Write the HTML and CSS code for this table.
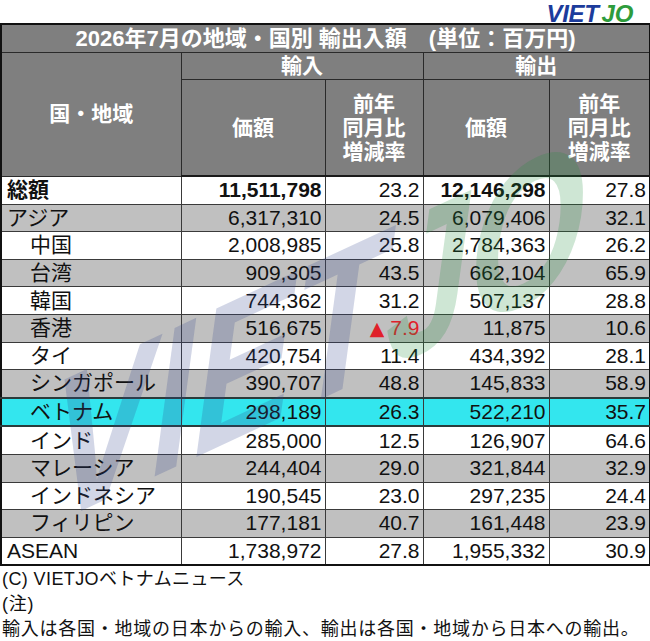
FILE: index.html
```html
<!DOCTYPE html>
<html lang="ja">
<head>
<meta charset="utf-8">
<title>2026年7月の地域・国別 輸出入額</title>
<link rel="stylesheet" href="styles.css">
</head>
<body>
<div class="page">
  <div class="logo-row"><span class="logo"><span class="logo-viet">VIET</span><span class="logo-jo">JO</span></span></div>
  <div class="table-wrap">
    <table class="trade">
      <colgroup>
        <col class="c-region"><col class="c-val1"><col class="c-rate1"><col class="c-val2"><col class="c-rate2">
      </colgroup>
      <thead>
        <tr class="title-row"><th colspan="5">2026年7月の地域・国別 輸出入額　(単位：百万円)</th></tr>
        <tr class="group-row"><th rowspan="2" class="region-head">国・地域</th><th colspan="2">輸入</th><th colspan="2">輸出</th></tr>
        <tr class="sub-row"><th>価額</th><th>前年<br>同月比<br>増減率</th><th>価額</th><th>前年<br>同月比<br>増減率</th></tr>
      </thead>
      <tbody>
        <tr class="total"><td class="name"><b>総額</b></td><td class="num"><b>11,511,798</b></td><td class="num">23.2</td><td class="num"><b>12,146,298</b></td><td class="num">27.8</td></tr>
        <tr class="gray"><td class="name">アジア</td><td class="num">6,317,310</td><td class="num">24.5</td><td class="num">6,079,406</td><td class="num">32.1</td></tr>
        <tr><td class="name sub">中国</td><td class="num">2,008,985</td><td class="num">25.8</td><td class="num">2,784,363</td><td class="num">26.2</td></tr>
        <tr class="gray"><td class="name sub">台湾</td><td class="num">909,305</td><td class="num">43.5</td><td class="num">662,104</td><td class="num">65.9</td></tr>
        <tr><td class="name sub">韓国</td><td class="num">744,362</td><td class="num">31.2</td><td class="num">507,137</td><td class="num">28.8</td></tr>
        <tr class="gray"><td class="name sub">香港</td><td class="num">516,675</td><td class="num neg"><span class="tri">▲</span> 7.9</td><td class="num">11,875</td><td class="num">10.6</td></tr>
        <tr><td class="name sub">タイ</td><td class="num">420,754</td><td class="num">11.4</td><td class="num">434,392</td><td class="num">28.1</td></tr>
        <tr class="gray"><td class="name sub">シンガポール</td><td class="num">390,707</td><td class="num">48.8</td><td class="num">145,833</td><td class="num">58.9</td></tr>
        <tr class="highlight"><td class="name sub">ベトナム</td><td class="num">298,189</td><td class="num">26.3</td><td class="num">522,210</td><td class="num">35.7</td></tr>
        <tr><td class="name sub">インド</td><td class="num">285,000</td><td class="num">12.5</td><td class="num">126,907</td><td class="num">64.6</td></tr>
        <tr class="gray"><td class="name sub">マレーシア</td><td class="num">244,404</td><td class="num">29.0</td><td class="num">321,844</td><td class="num">32.9</td></tr>
        <tr><td class="name sub">インドネシア</td><td class="num">190,545</td><td class="num">23.0</td><td class="num">297,235</td><td class="num">24.4</td></tr>
        <tr class="gray"><td class="name sub">フィリピン</td><td class="num">177,181</td><td class="num">40.7</td><td class="num">161,448</td><td class="num">23.9</td></tr>
        <tr><td class="name">ASEAN</td><td class="num">1,738,972</td><td class="num">27.8</td><td class="num">1,955,332</td><td class="num">30.9</td></tr>
      </tbody>
    </table>
    <div class="watermark" aria-hidden="true"><span class="wm-viet">VIET</span><span class="wm-jo">JO</span></div>
  </div>
  <div class="notes">
    <p class="credit">(C) VIETJOベトナムニュース</p>
    <p class="note">(注)</p>
    <p class="note">輸入は各国・地域の日本からの輸入、輸出は各国・地域から日本への輸出。</p>
  </div>
</div>
</body>
</html>
```

FILE: styles.css
```css
html, body {
  margin: 0;
  padding: 0;
  background: #ffffff;
}

body {
  font-family: "Liberation Sans", "Noto Sans CJK JP", sans-serif;
  color: #111111;
}

.page {
  width: 650px;
}

.logo-row {
  height: 23px;
  display: flex;
  justify-content: flex-end;
  align-items: flex-start;
  padding-right: 17px;
}

.logo {
  font-family: "Liberation Sans", sans-serif;
  font-style: italic;
  font-weight: bold;
  font-size: 24px;
  line-height: normal;
  letter-spacing: -0.3px;
}

.logo-viet {
  color: #1c3c9c;
  margin-right: 3px;
}

.logo-jo {
  color: #2e9c3c;
}

.table-wrap {
  position: relative;
  width: 650px;
  overflow: hidden;
}

.trade {
  border-collapse: collapse;
  table-layout: fixed;
  width: 649px;
  border: 2px solid #111111;
}

.c-region { width: 180px; }
.c-val1 { width: 144px; }
.c-rate1 { width: 98px; }
.c-val2 { width: 126px; }
.c-rate2 { width: 101px; }

.trade th {
  background: #7f7f7f;
  color: #ffffff;
  font-weight: bold;
  font-size: 21px;
  line-height: 24px;
  border: 1px solid #2a2a2a;
  padding: 0;
  text-align: center;
  vertical-align: middle;
}

.title-row th {
  height: 27px;
  font-size: 22px;
}

.group-row th {
  height: 26px;
}

.sub-row th {
  height: 95px;
}

.trade thead tr:last-child th {
  border-bottom: 2px solid #1a1a1a;
}

.trade td {
  height: 26.6px;
  padding: 0;
  font-size: 21px;
  line-height: 24px;
  border: 1px solid #3a3a3a;
  vertical-align: middle;
  white-space: nowrap;
}

.trade td.num {
  text-align: right;
  padding-right: 3px;
}

.trade td.name {
  padding-left: 5px;
}

.trade td.name.sub {
  padding-left: 28px;
}

.gray td {
  background: #c0c0c0;
}

.highlight td {
  background: #33e6ee;
  border-top: 2px solid #2b3b3b;
  border-bottom: 2px solid #2b3b3b;
}

.neg {
  color: #e0202a;
}

.tri {
  font-family: "DejaVu Sans", sans-serif;
  font-size: 19px;
}

.watermark {
  position: absolute;
  left: 52px;
  top: 330px;
  font-family: "Liberation Sans", sans-serif;
  font-style: italic;
  font-weight: bold;
  font-size: 150px;
  line-height: 1;
  white-space: nowrap;
  pointer-events: none;
  transform-origin: left top;
  transform: skewY(-25deg) scaleY(1.35);
}

.wm-viet {
  color: rgba(50, 70, 140, 0.22);
}

.wm-jo {
  color: rgba(30, 140, 60, 0.22);
}

.notes {
  padding: 1px 0 0 2px;
}

.notes p {
  margin: 0;
  line-height: 25px;
  font-size: 18px;
  color: #111111;
}

.credit {
  letter-spacing: 0.4px;
}

.note {
  letter-spacing: 0.75px;
}
```
